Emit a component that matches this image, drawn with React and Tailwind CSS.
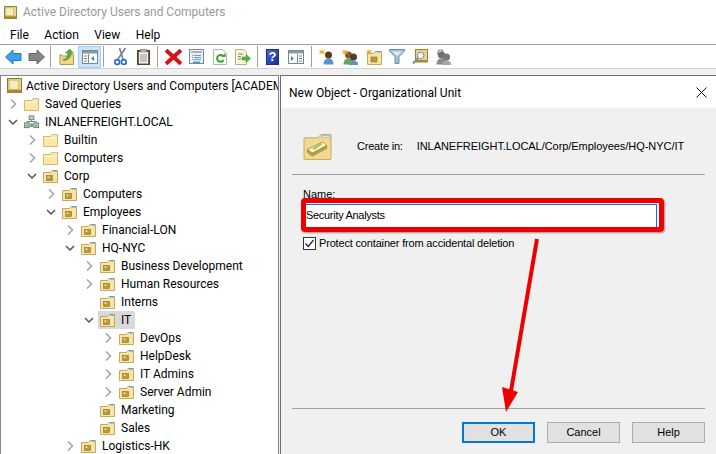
import React from 'react';

const Chevron = ({ open }) => (
  <svg width="12" height="12" viewBox="0 0 12 12" className="shrink-0">
    {open ? (
      <path d="M2 4 L6 8 L10 4" fill="none" stroke="#555" strokeWidth="1.5" />
    ) : (
      <path d="M4 1.5 L8.5 6 L4 10.5" fill="none" stroke="#a6a6a6" strokeWidth="1.6" />
    )}
  </svg>
);

const Folder = () => (
  <svg width="15" height="13" viewBox="0 0 15 13" className="shrink-0">
    <path d="M0.5 2.5 V12.5 H14.5 V0.5 H9 L7.5 2.5 Z" fill="#fbe7a8" stroke="#d9b765" />
    <path d="M1.5 3.5 H13.5 V5 H1.5 Z" fill="#fdf3cf" />
    <rect x="10" y="0" width="4" height="1" fill="#a9c4dc" />
  </svg>
);

const OuFolder = () => (
  <svg width="15" height="13" viewBox="0 0 15 13" className="shrink-0">
    <path d="M0.5 2.5 V12.5 H14.5 V0.5 H9 L7.5 2.5 Z" fill="#f8e4a4" stroke="#c9a85a" />
    <rect x="10" y="0" width="4" height="1.5" fill="#5f9fd6" />
    <rect x="3.5" y="5.5" width="6" height="5" fill="#b89a3e" stroke="#8a7228" strokeWidth="0.6" />
    <rect x="4.5" y="6.5" width="2" height="1.5" fill="#efe2a8" />
  </svg>
);

const BookIcon = ({ size = 15 }) => (
  <svg width={size} height={size} viewBox="0 0 14 14" className="shrink-0">
    <rect x="0.5" y="0.5" width="13" height="13" fill="#e9d98f" stroke="#8f7a2e" />
    <rect x="2" y="2" width="8.5" height="8.5" fill="#f6edbe" stroke="#c2ab52" strokeWidth="0.6" />
    <rect x="0.5" y="11" width="13" height="2.5" fill="#a58c35" />
  </svg>
);

const DomainIcon = () => (
  <svg width="15" height="14" viewBox="0 0 16 14" className="shrink-0">
    <rect x="5.5" y="0.5" width="5" height="4" fill="#c9ced3" stroke="#6f7a84" />
    <rect x="0.5" y="8" width="5" height="5" fill="#c9ced3" stroke="#6f7a84" />
    <rect x="10.5" y="8" width="5" height="5" fill="#c9ced3" stroke="#6f7a84" />
    <path d="M8 5 V7 M3 8 V6.5 H13 V8" fill="none" stroke="#6f7a84" />
    <rect x="2" y="10" width="2" height="2" fill="#55b848" />
    <rect x="12" y="10" width="2" height="2" fill="#55b848" />
    <rect x="6.5" y="8.5" width="3" height="4" fill="#55b848" />
  </svg>
);

const Arrow = ({ dir, fill, stroke }) => (
  <svg width="17" height="16" viewBox="0 0 17 16">
    <path
      d={dir === 'left' ? 'M0.5 8 L8 1 V4.5 H16 V11.5 H8 V15 Z' : 'M16.5 8 L9 1 V4.5 H1 V11.5 H9 V15 Z'}
      fill={fill}
      stroke={stroke}
    />
  </svg>
);

const UpIcon = () => (
  <svg width="16" height="18" viewBox="0 0 16 18">
    <path d="M1 6.5 V16.5 H14.5 V6.5 H10 L8 8 H4 Z" fill="#f3d68b" stroke="#b9974a" />
    <path d="M4 12 C7 11 9 9 9 5 H6.5 L10.5 1 L14.5 5 H12 C12 9 9 13 4 12 Z" fill="#58b03c" stroke="#3a8a25" strokeWidth="0.6" />
  </svg>
);

const PaneIcon = ({ arrow = '#2aa34a', right }) => (
  <svg width="16" height="14" viewBox="0 0 16 14">
    <rect x="0.5" y="0.5" width="15" height="13" fill="#fff" stroke="#7b8791" />
    <rect x="1" y="1" width="14" height="2.5" fill="#8b97a1" />
    {right ? (
      <>
        <path d="M3 6 L6 8.5 L3 11 Z" fill={arrow} />
        <path d="M9.5 4 V13" stroke="#7b8791" />
        <path d="M11 6 H14 M11 8.5 H14 M11 11 H14" stroke="#7b8791" />
      </>
    ) : (
      <>
        <path d="M2 6 H5 M2 8.5 H5 M2 11 H5" stroke="#7b8791" />
        <path d="M6.5 4 V13" stroke="#7b8791" />
        <path d="M12 6 L9 8.5 L12 11 Z" fill={arrow} />
      </>
    )}
  </svg>
);

const CutIcon = () => (
  <svg width="13" height="19" viewBox="0 0 13 19">
    <path d="M11.5 1 L4 12 M5.5 1 L9 12" fill="none" stroke="#77808a" strokeWidth="1.6" />
    <circle cx="3.2" cy="15" r="2.4" fill="none" stroke="#1f6fd0" strokeWidth="1.6" />
    <circle cx="9.8" cy="15" r="2.4" fill="none" stroke="#1f6fd0" strokeWidth="1.6" />
  </svg>
);

const ClipboardIcon = () => (
  <svg width="13" height="16" viewBox="0 0 13 16">
    <rect x="0.5" y="1.5" width="12" height="14" fill="#7c5a34" stroke="#5d4326" />
    <rect x="2" y="3" width="9" height="11.5" fill="#f2f2ee" />
    <path d="M3 6 H10 M3 8 H10 M3 10 H10 M3 12 H10" stroke="#8a96a0" />
    <rect x="3.5" y="0.5" width="6" height="2.5" fill="#b9bec3" stroke="#6a6f74" strokeWidth="0.6" />
  </svg>
);

const DeleteIcon = () => (
  <svg width="17" height="16" viewBox="0 0 17 16">
    <path d="M2.5 2.5 L14.5 13.5 M14.5 2.5 L2.5 13.5" stroke="#d8121c" strokeWidth="4" strokeLinecap="square" />
  </svg>
);

const PropsIcon = () => (
  <svg width="15" height="15" viewBox="0 0 15 15">
    <rect x="0.5" y="0.5" width="14" height="14" fill="#eef1f4" stroke="#7b8791" />
    <rect x="2" y="2" width="11" height="2" fill="#aab4bd" />
    <path d="M3 6.5 H4 M5 6.5 H12 M3 8.5 H4 M5 8.5 H12 M3 10.5 H4 M5 10.5 H12" stroke="#6e9cc4" />
    <rect x="4" y="12.5" width="7" height="1.5" fill="#27a4e8" />
  </svg>
);

const RefreshIcon = () => (
  <svg width="14" height="16" viewBox="0 0 14 16">
    <path d="M0.5 0.5 H9.5 L13.5 4.5 V15.5 H0.5 Z" fill="#fdfdfb" stroke="#b4b4ac" />
    <path d="M10 7 A3.4 3.4 0 1 0 10.5 11" fill="none" stroke="#3aa52c" strokeWidth="2" />
    <path d="M8 8 L12.5 8 L12.5 4 Z" fill="#3aa52c" />
  </svg>
);

const ExportIcon = () => (
  <svg width="16" height="16" viewBox="0 0 16 16">
    <path d="M0.5 0.5 H8.5 L11.5 3.5 V15.5 H0.5 Z" fill="#fbf6d8" stroke="#b4ae88" />
    <path d="M3 5 H8 M3 7.5 H6 M3 10 H6" stroke="#77807f" />
    <path d="M7 8 H11 V5.5 L15.5 9.5 L11 13.5 V11 H7 Z" fill="#53b53c" stroke="#3a8a25" strokeWidth="0.5" />
  </svg>
);

const HelpIcon = () => (
  <div className="w-[13px] h-[16px] bg-gradient-to-br from-[#4a63d8] to-[#1c2f96] border border-[#1c2f8a] flex items-center justify-center text-white text-[13px] font-bold leading-none font-['Liberation_Sans',sans-serif]">
    ?
  </div>
);

const Person = ({ x = 0, y = 0, body = '#5b93c9', head = '#5a3a22' }) => (
  <g transform={`translate(${x} ${y})`}>
    <path d="M0.5 13.5 C0.5 9 3 7.5 5.5 7.5 C8 7.5 10.5 9 10.5 13.5 Z" fill={body} />
    <circle cx="5.5" cy="4" r="3.5" fill={head} />
  </g>
);

const Spark = ({ x = 0, y = 0 }) => (
  <path
    transform={`translate(${x} ${y})`}
    d="M3 0 L3.7 2 L6 1 L4.7 3 L6 5 L3.7 4.2 L3 6 L2.3 4.2 L0 5 L1.3 3 L0 1 L2.3 2 Z"
    fill="#f5a623"
  />
);

const NewUserIcon = () => (
  <svg width="16" height="16" viewBox="0 0 16 16">
    <Person x={4} y={2} />
    <Spark x={0} y={0} />
  </svg>
);

const NewGroupIcon = () => (
  <svg width="16" height="16" viewBox="0 0 16 16">
    <Person x={1} y={2} body="#6aa84f" head="#7a5a30" />
    <Person x={6} y={4} />
    <Spark x={0} y={0} />
  </svg>
);

const NewOuIcon = () => (
  <svg width="16" height="16" viewBox="0 0 16 16">
    <path d="M1.5 4.5 V15.5 H15.5 V2.5 H9 L7.5 4.5 Z" fill="#f8e4a4" stroke="#c9a85a" />
    <rect x="11" y="2" width="4" height="1.5" fill="#5f9fd6" />
    <rect x="5" y="8" width="6" height="5" fill="#b89a3e" stroke="#8a7228" strokeWidth="0.6" />
    <Spark x={0} y={0} />
  </svg>
);

const FilterIcon = () => (
  <svg width="16" height="15" viewBox="0 0 16 15">
    <path d="M0.5 0.5 H15.5 V2 L10 7.5 V14.5 H6 V7.5 L0.5 2 Z" fill="#9fc2d6" stroke="#6b8ea3" />
    <path d="M3 2.5 H13 L9 6.5 H7 Z" fill="#d8e8f0" />
  </svg>
);

const FindIcon = () => (
  <svg width="16" height="16" viewBox="0 0 16 16">
    <rect x="3.5" y="0.5" width="12" height="12.5" fill="#e6d48a" stroke="#9a8433" />
    <rect x="3.5" y="11" width="12" height="2" fill="#a58c35" />
    <circle cx="8.5" cy="6.5" r="3.3" fill="#f4f7fa" stroke="#8a8f94" />
    <path d="M6 9 L1 14.5" stroke="#8a8f94" strokeWidth="2" />
  </svg>
);

const DelegateIcon = () => (
  <svg width="17" height="16" viewBox="0 0 17 16">
    <path d="M3 6 V3.5 A2.5 2.5 0 0 1 8 3.5" fill="none" stroke="#7c7c7c" strokeWidth="1.2" />
    <Person x={1} y={2} body="#8b8b8b" head="#6e6e6e" />
    <Person x={6} y={4} body="#a5a5a5" head="#777" />
  </svg>
);

const OuLargeIcon = () => (
  <svg width="29" height="27" viewBox="0 0 29 28" className="shrink-0">
    <path d="M0.5 6 V26.5 Q0.5 27.5 1.5 27.5 H27.5 Q28.5 27.5 28.5 26.5 V1.5 H18 L15 5 H1.5 Q0.5 5 0.5 6 Z" fill="#f1d98f" stroke="#c8a85e" />
    <rect x="19" y="2.5" width="8" height="2.5" fill="#d9e6ef" stroke="#7fa7c7" strokeWidth="0.6" />
    <path d="M4 17 L20 9 L24 13 L9 21 Z" fill="#fdf7d8" stroke="#a99a4d" />
    <path d="M4 17 V20 L9 24 L24 16 V13 L9 21 Z" fill="#b8a445" stroke="#8f7f33" strokeWidth="0.6" />
    <path d="M9 16 L18 10 L20 11.5 L11 17.5 Z" fill="#a7c25a" />
  </svg>
);

const Sep = ({ className }) => <div className={`w-px h-[21px] bg-[#a0a0a0] shrink-0 ${className}`} />;

const Slot = ({ children, active, className = 'w-[23px]' }) => (
  <div
    className={`h-[22px] shrink-0 flex items-center justify-center ${className} ${
      active ? 'bg-[#cce4f7] border border-[#99d1ff]' : ''
    }`}
  >
    {children}
  </div>
);

const levels = ['pl-[7px]', 'pl-[6px]', 'pl-[25px]', 'pl-[44px]', 'pl-[63px]', 'pl-[82px]', 'pl-[101px]'];

const TreeRow = ({ level, label, icon = 'ou', chevron, selected }) => (
  <div className={`h-[18px] flex items-center whitespace-nowrap ${levels[level]}`}>
    <div className="w-[12px] shrink-0 flex items-center justify-center">
      {chevron && <Chevron open={chevron === 'open'} />}
    </div>
    <div className={`h-[18px] ml-[3px] pl-[2px] pr-[4px] flex items-center ${selected ? 'bg-[#d9d9d9]' : ''}`}>
      {icon === 'ou' && <OuFolder />}
      {icon === 'folder' && <Folder />}
      {icon === 'domain' && <DomainIcon />}
      <span className="ml-[6px]">{label}</span>
    </div>
  </div>
);

const rows = [
  { level: 1, label: 'Saved Queries', icon: 'folder', chevron: 'closed' },
  { level: 1, label: 'INLANEFREIGHT.LOCAL', icon: 'domain', chevron: 'open' },
  { level: 2, label: 'Builtin', icon: 'folder', chevron: 'closed' },
  { level: 2, label: 'Computers', icon: 'folder', chevron: 'closed' },
  { level: 2, label: 'Corp', chevron: 'open' },
  { level: 3, label: 'Computers', chevron: 'closed' },
  { level: 3, label: 'Employees', chevron: 'open' },
  { level: 4, label: 'Financial-LON', chevron: 'closed' },
  { level: 4, label: 'HQ-NYC', chevron: 'open' },
  { level: 5, label: 'Business Development', chevron: 'closed' },
  { level: 5, label: 'Human Resources', chevron: 'closed' },
  { level: 5, label: 'Interns' },
  { level: 5, label: 'IT', chevron: 'open', selected: true },
  { level: 6, label: 'DevOps', chevron: 'closed' },
  { level: 6, label: 'HelpDesk', chevron: 'closed' },
  { level: 6, label: 'IT Admins', chevron: 'closed' },
  { level: 6, label: 'Server Admin', chevron: 'closed' },
  { level: 5, label: 'Marketing' },
  { level: 5, label: 'Sales' },
  { level: 4, label: 'Logistics-HK', chevron: 'closed' },
];

const DialogButton = ({ children, primary }) => (
  <button
    className={`w-[73px] h-[21px] bg-[#e1e1e1] flex items-center justify-center ${
      primary ? 'border-2 border-[#0078d7]' : 'border border-[#adadad]'
    }`}
  >
    {children}
  </button>
);

export default function App() {
  return (
    <div className="w-[716px] h-[454px] overflow-hidden bg-[#f0f0f0] flex flex-col text-[12px] text-black font-['Roboto',sans-serif]">
      {/* Title bar */}
      <div className="h-[25px] bg-white flex items-center pl-[4px] pb-px shrink-0">
        <BookIcon size={13} />
        <span className="ml-[6px] text-[#999999]">Active Directory Users and Computers</span>
      </div>

      {/* Menu */}
      <div className="h-[20px] bg-white flex items-center pl-[10px] gap-[15.5px] shrink-0 border-b border-[#a0a0a0]">
        <span>File</span>
        <span>Action</span>
        <span>View</span>
        <span>Help</span>
      </div>

      {/* Toolbar */}
      <div className="h-[24px] bg-white flex items-center pl-[2px] shrink-0 border-b border-[#d4d4d4]">
        <Slot><Arrow dir="left" fill="#3aa0ec" stroke="#1f78c8" /></Slot>
        <Slot><Arrow dir="right" fill="#858585" stroke="#666666" /></Slot>
        <Sep className="ml-[2px] mr-[4px]" />
        <Slot><UpIcon /></Slot>
        <Slot active><PaneIcon /></Slot>
        <Sep className="ml-[2px] mr-[5px]" />
        <Slot><CutIcon /></Slot>
        <Slot><ClipboardIcon /></Slot>
        <Sep className="ml-[2px] mr-[4px]" />
        <Slot><DeleteIcon /></Slot>
        <Slot><PropsIcon /></Slot>
        <Slot><RefreshIcon /></Slot>
        <Slot><ExportIcon /></Slot>
        <Sep className="ml-[3px] mr-[3px]" />
        <Slot><HelpIcon /></Slot>
        <Slot><PaneIcon right /></Slot>
        <Sep className="ml-[4px] mr-[3px]" />
        <Slot><NewUserIcon /></Slot>
        <Slot className="w-[24px]"><NewGroupIcon /></Slot>
        <Slot><NewOuIcon /></Slot>
        <Slot><FilterIcon /></Slot>
        <Slot><FindIcon /></Slot>
        <Slot className="w-[24px]"><DelegateIcon /></Slot>
      </div>

      <div className="h-[6px] shrink-0" />

      {/* Main */}
      <div className="flex-1 flex min-h-0">
        {/* Tree */}
        <div className="w-[279px] shrink-0 bg-white border-t border-l border-r border-[#828790] overflow-hidden">
          <div className="h-[19px] flex items-center pl-[6px] whitespace-nowrap">
            <BookIcon />
            <span className="ml-[4px]">Active Directory Users and Computers [ACADEM</span>
          </div>
          {rows.map((r, i) => (
            <TreeRow key={i} {...r} />
          ))}
        </div>

        {/* Dialog */}
        <div className="relative flex-1 min-w-0 ml-px border-t border-l border-[#6d6d6d] flex flex-col">
          <div className="h-[32px] bg-white flex items-center justify-between pl-[8px] pr-[9px] pt-px shrink-0">
            <span>New Object - Organizational Unit</span>
            <svg width="11" height="11" viewBox="0 0 11 11">
              <path d="M0.5 0.5 L10.5 10.5 M10.5 0.5 L0.5 10.5" stroke="#111" />
            </svg>
          </div>

          <div className="flex-1 flex flex-col px-[11px] text-[11px] font-['Liberation_Sans',sans-serif]">
            <div className="flex items-center h-[56px] mt-[10px] pl-[11px] shrink-0 whitespace-nowrap">
              <OuLargeIcon />
              <span className="ml-[25px] tracking-[-0.2px]">Create in:</span>
              <span className="ml-[14px] tracking-[-0.05px]">INLANEFREIGHT.LOCAL/Corp/Employees/HQ-NYC/IT</span>
            </div>
            <div className="h-px bg-[#a0a0a0] shrink-0" />

            <div className="mt-[13px] pl-[11px] leading-[12px] shrink-0">Name:</div>
            <div className="relative ml-[12px] mt-[4px] w-[353px] h-[24px] bg-white border border-[#0078d7] flex items-center pl-[1px] pb-px shrink-0 tracking-[-0.3px]">
              Security Analysts
              <div className="absolute -left-[4px] -top-[7px] -right-[8px] -bottom-[5px] border-[5px] border-[#ee0000] rounded-[4px] shadow-[1px_1px_2px_rgba(0,0,0,0.4)]" />
            </div>

            <div className="flex items-center mt-[9px] ml-[11px] leading-[13px] shrink-0">
              <div className="w-[13px] h-[13px] border border-[#333] bg-white flex items-center justify-center">
                <svg width="11" height="11" viewBox="0 0 11 11">
                  <path d="M1.5 5.5 L4.2 8.5 L9.5 2" fill="none" stroke="#222" strokeWidth="1.2" />
                </svg>
              </div>
              <span className="ml-[3px] tracking-[-0.17px]">Protect container from accidental deletion</span>
            </div>

            <div className="flex-1" />
            <div className="h-px bg-[#a0a0a0] shrink-0" />
            <div className="flex justify-end gap-[12px] mt-[13px] mb-[11px] shrink-0">
              <DialogButton primary>OK</DialogButton>
              <DialogButton>Cancel</DialogButton>
              <DialogButton>Help</DialogButton>
            </div>
          </div>

          {/* Red annotation arrow */}
          <svg className="absolute left-[200px] top-[155px]" width="80" height="190" viewBox="0 0 80 190">
            <path d="M56 8 L30 160" stroke="#ee0000" strokeWidth="4" fill="none" />
            <path d="M21 156 L37 161 L25 181 Z" fill="#ee0000" />
          </svg>
        </div>
      </div>
    </div>
  );
}
